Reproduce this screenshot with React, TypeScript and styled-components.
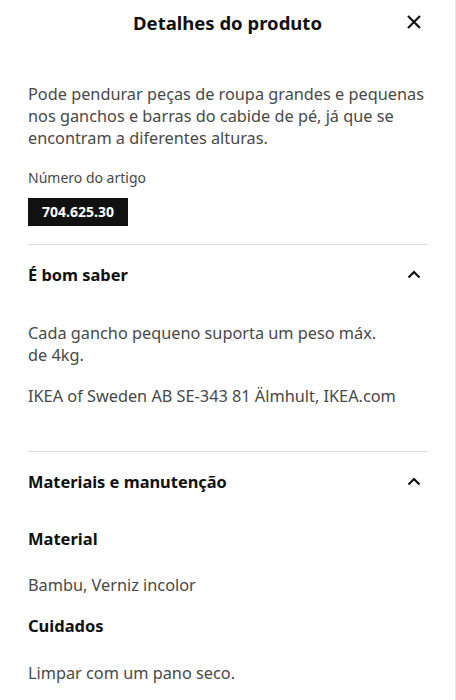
import React from "react";
import styled, { createGlobalStyle } from "styled-components";

const Global = createGlobalStyle`
  html, body { margin: 0; padding: 0; background: #fff; }
  body { font-family: "Noto Sans", "Open Sans", sans-serif; -webkit-font-smoothing: antialiased; }
  * { box-sizing: border-box; }
`;

const Panel = styled.div`
  width: 456px;
  height: 700px;
  overflow: hidden;
  background: #fff;
  border-right: 1px solid #e6e6e6;
  color: #111;
`;

const Header = styled.header`
  position: relative;
  height: 44px;
  display: flex;
  align-items: center;
  justify-content: center;
`;

const Title = styled.h1`
  margin: 0;
  font-size: 18.5px;
  font-weight: 700;
  color: #111;
`;

const CloseButton = styled.button`
  position: absolute;
  right: 27px;
  top: 8px;
  width: 28px;
  height: 28px;
  border: 0;
  background: transparent;
  padding: 0;
  display: flex;
  align-items: center;
  justify-content: center;
`;

const Body = styled.div`
  padding: 0 28px;
`;

const Intro = styled.section`
  padding-top: 39px;
  padding-bottom: 18px;
  border-bottom: 1px solid #dfdfdf;
`;

const Paragraph = styled.p<{ $mb?: number }>`
  margin: 0 0 ${(p) => p.$mb ?? 0}px;
  font-size: 16.3px;
  line-height: 22px;
  color: #484848;
`;

const Label = styled.div`
  font-size: 14px;
  line-height: 20px;
  color: #484848;
  margin-bottom: 10px;
`;

const BadgeRow = styled.div`
  display: flex;
  height: 28px;
`;

const Badge = styled.div`
  background: #111;
  color: #fff;
  font-size: 14px;
  font-weight: 700;
  line-height: 28px;
  height: 28px;
  padding: 0 14px;
`;

const Section = styled.section<{ $last?: boolean }>`
  border-bottom: ${(p) => (p.$last ? "none" : "1px solid #dfdfdf")};
`;

const SectionHead = styled.div`
  height: 58px;
  display: flex;
  align-items: center;
  justify-content: space-between;
`;

const SectionTitle = styled.h2`
  margin: 0;
  font-size: 16.4px;
  font-weight: 700;
  color: #111;
`;

const SectionBody = styled.div<{ $pt: number; $pb: number }>`
  padding-top: ${(p) => p.$pt}px;
  padding-bottom: ${(p) => p.$pb}px;
`;

const SubTitle = styled.h3<{ $mb: number }>`
  margin: 0 0 ${(p) => p.$mb}px;
  font-size: 16.5px;
  line-height: 24px;
  font-weight: 700;
  color: #111;
`;

const IconBox = styled.span`
  width: 28px;
  margin-right: -1px;
  display: flex;
  justify-content: center;
`;

const Chevron = () => (
  <IconBox>
    <svg width="14" height="9" viewBox="0 0 14 9" fill="none">
      <path d="M1.5 7.5L7 2L12.5 7.5" stroke="#111" strokeWidth="2.2" />
    </svg>
  </IconBox>
);

export default function App() {
  return (
    <>
      <Global />
      <Panel>
        <Header>
          <Title>Detalhes do produto</Title>
          <CloseButton aria-label="Fechar">
            <svg width="16" height="16" viewBox="0 0 16 16" fill="none">
              <path d="M2 2L14 14M14 2L2 14" stroke="#111" strokeWidth="2.2" />
            </svg>
          </CloseButton>
        </Header>
        <Body>
          <Intro>
            <Paragraph $mb={19}>
              Pode pendurar peças de roupa grandes e pequenas nos ganchos e barras do cabide de pé, já que se encontram a diferentes alturas.
            </Paragraph>
            <Label>Número do artigo</Label>
            <BadgeRow>
              <Badge>704.625.30</Badge>
            </BadgeRow>
          </Intro>
          <Section>
            <SectionHead>
              <SectionTitle>É bom saber</SectionTitle>
              <Chevron />
            </SectionHead>
            <SectionBody $pt={19} $pb={44}>
              <Paragraph $mb={19}>
                Cada gancho pequeno suporta um peso máx.<br />de 4kg.
              </Paragraph>
              <Paragraph>IKEA of Sweden AB SE-343 81 Älmhult, IKEA.com</Paragraph>
            </SectionBody>
          </Section>
          <Section $last>
            <SectionHead>
              <SectionTitle>Materiais e manutenção</SectionTitle>
              <Chevron />
            </SectionHead>
            <SectionBody $pt={17} $pb={0}>
              <SubTitle $mb={23}>Material</SubTitle>
              <Paragraph $mb={18}>Bambu, Verniz incolor</Paragraph>
              <SubTitle $mb={24}>Cuidados</SubTitle>
              <Paragraph>Limpar com um pano seco.</Paragraph>
            </SectionBody>
          </Section>
        </Body>
      </Panel>
    </>
  );
}
